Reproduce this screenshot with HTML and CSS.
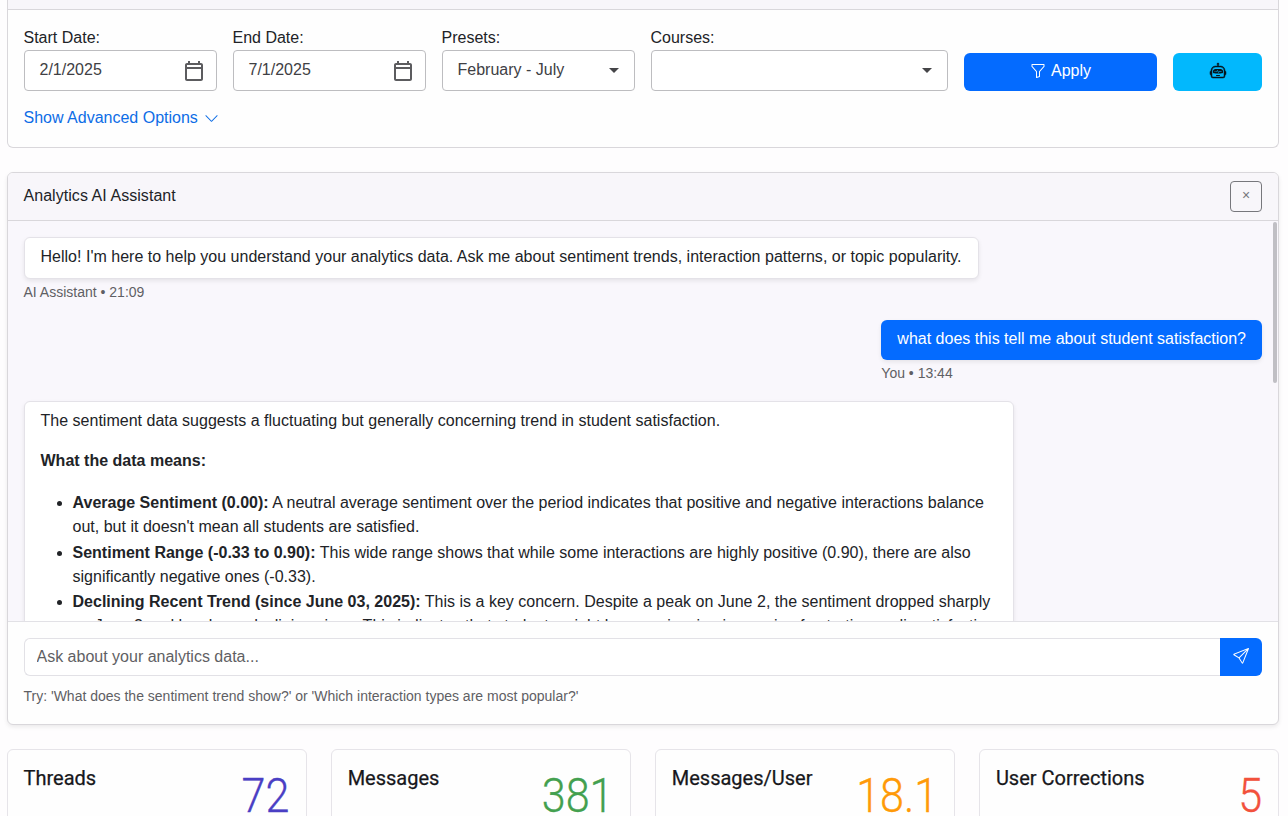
FILE: index.html
```
<!DOCTYPE html>
<html lang="en">
<head>
    <meta charset="UTF-8">
    <meta name="viewport" content="width=device-width, initial-scale=1.0">
    <title>Analytics Dashboard</title>
    <link rel="stylesheet" href="styles.css">
</head>
<body>
<div class="page">

    <div class="card filters">
        <div class="filters-header"></div>
        <div class="filters-body">
            <div class="filters-row">
                <div class="field field-sm">
                    <div class="label">Start Date:</div>
                    <div class="control">
                        <span class="value">2/1/2025</span>
                        <svg class="calendar" width="24" height="24" viewBox="0 0 24 24"><path fill="currentColor" d="M19 4h-1V2h-2v2H8V2H6v2H5c-1.100 0-2 .9-2 2v14c0 1.100.9 2 2 2h14c1.100 0 2-.9 2-2V6c0-1.100-.9-2-2-2zm0 16H5V10h14v10zm0-12H5V6h14v2z"/></svg>
                    </div>
                </div>
                <div class="field field-sm">
                    <div class="label">End Date:</div>
                    <div class="control">
                        <span class="value">7/1/2025</span>
                        <svg class="calendar" width="24" height="24" viewBox="0 0 24 24"><path fill="currentColor" d="M19 4h-1V2h-2v2H8V2H6v2H5c-1.100 0-2 .9-2 2v14c0 1.100.9 2 2 2h14c1.100 0 2-.9 2-2V6c0-1.100-.9-2-2-2zm0 16H5V10h14v10zm0-12H5V6h14v2z"/></svg>
                    </div>
                </div>
                <div class="field field-sm">
                    <div class="label">Presets:</div>
                    <div class="control">
                        <span class="value">February - July</span>
                        <span class="arrow"></span>
                    </div>
                </div>
                <div class="field field-lg">
                    <div class="label">Courses:</div>
                    <div class="control">
                        <span class="value"></span>
                        <span class="arrow"></span>
                    </div>
                </div>
                <button class="btn btn-apply">
                    <svg width="16" height="16" viewBox="0 0 16 16" fill="currentColor"><path d="M1.500 1.500A.5.5 0 0 1 2 1h12a.5.5 0 0 1 .5.5v2a.5.5 0 0 1-.128.334L10 8.692V13.500a.5.5 0 0 1-.342.474l-3 1A.5.5 0 0 1 6 14.500V8.692L1.628 3.834A.5.5 0 0 1 1.500 3.500zm1 .5v1.308l4.372 4.858A.5.5 0 0 1 7 8.500v5.306l2-.666V8.500a.5.5 0 0 1 .128-.334L13.500 3.308V2z"/></svg>
                    <span>Apply</span>
                </button>
                <button class="btn btn-robot" aria-label="Assistant">
                    <svg width="16" height="16" viewBox="0 0 16 16" fill="currentColor"><path d="M6 12.500a.5.5 0 0 1 .5-.5h3a.5.5 0 0 1 0 1h-3a.5.5 0 0 1-.5-.5M3 8.062C3 6.760 4.235 5.765 5.530 5.886a26.600 26.600 0 0 0 4.940 0C11.765 5.765 13 6.760 13 8.062v1.157a.93.93 0 0 1-.765.935c-.845.147-2.340.346-4.235.346s-3.390-.2-4.235-.346A.93.93 0 0 1 3 9.219zm4.542-.827a.25.25 0 0 0-.217.068l-.92.900a25 25 0 0 1-1.871-.183.25.25 0 0 0-.068.495c.55.076 1.232.149 2.020.193a.25.25 0 0 0 .189-.071l.754-.736.847 1.710a.25.25 0 0 0 .404.062l.932-.970a25 25 0 0 0 1.922-.188.25.25 0 0 0-.068-.495c-.538.074-1.207.145-1.980.189a.25.25 0 0 0-.166.076l-.754.785-.842-1.700a.25.25 0 0 0-.182-.135"/><path class="robot-head" d="M8.500 1.866a1 1 0 1 0-1 0V3h-2A4.500 4.500 0 0 0 1 7.500V8a1 1 0 0 0-1 1v2a1 1 0 0 0 1 1v1a2 2 0 0 0 2 2h10a2 2 0 0 0 2-2v-1a1 1 0 0 0 1-1V9a1 1 0 0 0-1-1v-.5A4.500 4.500 0 0 0 10.500 3h-2zM14 7.500V13a1 1 0 0 1-1 1H3a1 1 0 0 1-1-1V7.500A3.500 3.500 0 0 1 5.500 4h5A3.500 3.500 0 0 1 14 7.500"/></svg>
                </button>
            </div>
            <a class="advanced">
                <span>Show Advanced Options</span>
                <svg width="15" height="15" viewBox="0 0 16 16" fill="currentColor"><path d="M1.646 4.646a.5.5 0 0 1 .708 0L8 10.293l5.646-5.647a.5.5 0 0 1 .708.708l-6 6a.5.5 0 0 1-.708 0l-6-6a.5.5 0 0 1 0-.708"/></svg>
            </a>
        </div>
    </div>

    <div class="card chat">
        <div class="chat-header">
            <span class="chat-title">Analytics AI Assistant</span>
            <button class="close-button">×</button>
        </div>
        <div class="messages">
            <div class="message">
                <div class="bubble">Hello! I'm here to help you understand your analytics data. Ask me about sentiment trends, interaction patterns, or topic popularity.</div>
                <div class="meta">AI Assistant • 21:09</div>
            </div>
            <div class="message user">
                <div class="bubble">what does this tell me about student satisfaction?</div>
                <div class="meta">You • 13:44</div>
            </div>
            <div class="message long">
                <div class="bubble">
                    <p>The sentiment data suggests a fluctuating but generally concerning trend in student satisfaction.</p>
                    <p><b>What the data means:</b></p>
                    <ul>
                        <li><b>Average Sentiment (0.00):</b> A neutral average sentiment over the period indicates that positive and negative interactions balance<br>out, but it doesn't mean all students are satisfied.</li>
                        <li><b>Sentiment Range (-0.33 to 0.90):</b> This wide range shows that while some interactions are highly positive (0.90), there are also<br>significantly negative ones (-0.33).</li>
                        <li><b>Declining Recent Trend (since June 03, 2025):</b> This is a key concern. Despite a peak on June 2, the sentiment dropped sharply<br>on June 3 and has been declining since. This indicates that students might be experiencing increasing frustration or dissatisfaction</li>
                    </ul>
                </div>
            </div>
            <div class="scroll-thumb"></div>
        </div>
        <div class="chat-footer">
            <div class="input-group">
                <input type="text" class="chat-input" placeholder="Ask about your analytics data...">
                <button class="send-button" aria-label="Send">
                    <svg width="16" height="16" viewBox="0 0 16 16" fill="currentColor"><path d="M15.854.146a.5.5 0 0 1 .11.540l-5.819 14.547a.75.75 0 0 1-1.329.124l-3.178-4.995L.643 7.184a.75.75 0 0 1 .124-1.330L15.314.037a.5.5 0 0 1 .540.110ZM6.636 10.070l2.761 4.338L14.130 2.576zm6.787-8.201L1.591 6.602l4.339 2.760z"/></svg>
                </button>
            </div>
            <div class="hint">Try: 'What does the sentiment trend show?' or 'Which interaction types are most popular?'</div>
        </div>
    </div>

    <div class="stats">
        <div class="card stat">
            <div class="stat-title">Threads</div>
            <div class="stat-value purple">72</div>
        </div>
        <div class="card stat">
            <div class="stat-title">Messages</div>
            <div class="stat-value green">381</div>
        </div>
        <div class="card stat">
            <div class="stat-title">Messages/User</div>
            <div class="stat-value orange">18.1</div>
        </div>
        <div class="card stat">
            <div class="stat-title">User Corrections</div>
            <div class="stat-value red">5</div>
        </div>
    </div>

</div>
</body>
</html>
```
FILE: styles.css
```
* {
    box-sizing: border-box;
}
html, body {
    height: 100%;
    overflow: hidden;
}
body {
    margin: 0;
    background: #fefdfe;
    color: #212327;
    font-family: "Liberation Sans", Arial, sans-serif;
    font-size: 16px;
    line-height: 24px;
}
.page {
    padding: 0 9px 0 6.5px;
}
.card {
    background: #fefefe;
    border: 1px solid #d9d7db;
    border-radius: 6px;
}

/* filters */
.filters {
    height: 148px;
    border-top: none;
    border-radius: 0 0 6px 6px;
}
.filters-header {
    height: 10px;
    background: #f8f6fa;
    border-bottom: 1px solid #d9d7db;
}
.filters-body {
    padding: 16px 16px 0;
}
.filters-row {
    display: flex;
    align-items: flex-end;
    gap: 16px;
}
.field-sm {
    width: 193px;
}
.field-lg {
    width: 297.5px;
}
.label {
    height: 24px;
}
.control {
    display: flex;
    align-items: center;
    justify-content: space-between;
    height: 41px;
    padding: 0 15px;
    background: #fff;
    border: 1px solid #bdbdc0;
    border-radius: 4px;
    color: #404044;
}
.value {
    padding-bottom: 1px;
}
.calendar {
    margin-right: -5px;
    color: #5c5c5f;
}
.arrow {
    border-left: 5px solid transparent;
    border-right: 5px solid transparent;
    border-top: 5px solid #454548;
}
.btn {
    display: flex;
    align-items: center;
    justify-content: center;
    gap: 5px;
    height: 38px;
    padding: 0 0 2px;
    border: none;
    border-radius: 6px;
    font: inherit;
}
.btn-apply {
    width: 193px;
    background: #046bff;
    color: #fff;
}
.btn-robot {
    width: 89px;
    background: #02b8fd;
    color: #06141c;
}
.btn-robot svg {
    overflow: visible;
}
.robot-head {
    stroke: currentColor;
    stroke-width: 0.5;
}
.advanced {
    display: flex;
    align-items: center;
    gap: 6px;
    margin-top: 15px;
    color: #0d6de6;
}

/* assistant */
.chat {
    height: 553px;
    margin-top: 24px;
    overflow: hidden;
    box-shadow: 0 2px 4px rgba(0, 0, 0, 0.08);
}
.chat-header {
    display: flex;
    align-items: center;
    justify-content: space-between;
    height: 48px;
    padding: 0 16px 1px;
    background: #f8f6fa;
    border-bottom: 1px solid #d9d7db;
}
.chat-title {
    padding-bottom: 1px;
    letter-spacing: 0.05px;
}
.close-button {
    width: 32px;
    height: 31px;
    padding: 0 0 3px;
    background: none;
    border: 1px solid #77777c;
    border-radius: 4px;
    color: #77777c;
    font: 14px "Liberation Sans", Arial, sans-serif;
}
.messages {
    position: relative;
    height: 400px;
    padding: 16px;
    overflow: hidden;
    background: #f9f7fc;
}
.message {
    display: flex;
    flex-direction: column;
    align-items: flex-start;
    margin-bottom: 18px;
}
.bubble {
    padding: 7px 16px 9px;
    background: #fff;
    border: 1px solid #e4e2e8;
    border-radius: 6px;
    box-shadow: 0 2px 4px rgba(0, 0, 0, 0.08);
    letter-spacing: 0.01px;
}
.meta {
    margin-top: 3px;
    font-size: 14px;
    line-height: 20px;
    color: #5f5f64;
}
.user {
    width: max-content;
    margin-left: auto;
}
.user .bubble {
    background: #046bff;
    border: none;
    color: #fff;
    letter-spacing: 0;
}
.long .bubble {
    width: 990px;
    white-space: nowrap;
}
.bubble p {
    margin: 0 0 16px;
}
.bubble ul {
    margin: 18px 0 0;
    padding-left: 32px;
}
.bubble li {
    margin-bottom: 1.7px;
}
.scroll-thumb {
    position: absolute;
    top: 1px;
    right: 1px;
    width: 4px;
    height: 161px;
    border-radius: 2px;
    background: #c0bfc4;
}
.chat-footer {
    height: 104px;
    padding: 16px 16px 0;
    border-top: 1px solid #e2e1e6;
}
.input-group {
    display: flex;
    height: 38px;
}
.chat-input {
    flex: 1;
    padding: 0 12px;
    background: #fff;
    border: 1px solid #e2e1e6;
    border-right: none;
    border-radius: 6px 0 0 6px;
    font: inherit;
}
.chat-input::placeholder {
    color: #5f5f64;
    opacity: 1;
}
.send-button {
    width: 42px;
    padding: 0;
    background: #046bff;
    border: none;
    border-radius: 0 6px 6px 0;
    color: #fff;
}
.hint {
    margin-top: 10px;
    font-size: 14px;
    line-height: 21px;
    color: #5f5f64;
}

/* stats */
.stats {
    display: grid;
    grid-template-columns: repeat(4, 1fr);
    gap: 24px;
    margin-top: 24px;
}
.stat {
    display: flex;
    justify-content: space-between;
    height: 120px;
    padding: 16px;
    border-color: #e6e4e9;
    font-family: Roboto, sans-serif;
}
.stat-title {
    font-size: 20px;
    color: #17171b;
    -webkit-text-stroke: 0.25px #17171b;
}
.stat-value {
    font-size: 49px;
    font-weight: 300;
    line-height: 59px;
    transform: scaleX(0.88);
    transform-origin: right;
    -webkit-text-stroke: 0.3px currentColor;
}
.purple { color: #4a3fc4; }
.green { color: #43a04f; }
.orange { color: #ff9a08; }
.red { color: #f2513c; }
```
